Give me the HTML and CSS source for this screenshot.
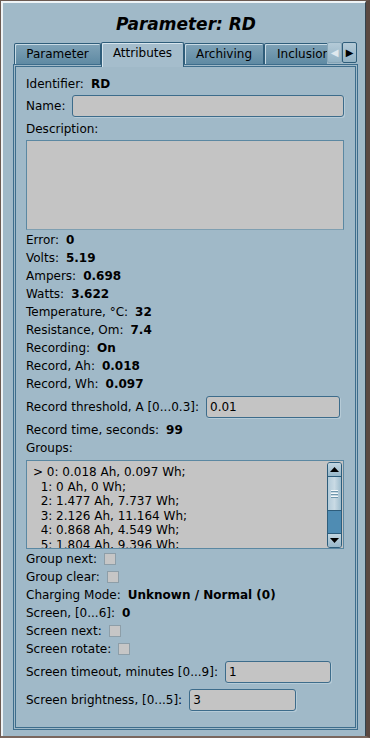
FILE: index.html
```html
<!DOCTYPE html>
<html>
<head>
    <title>Parameter: RD</title>
    <link rel="stylesheet" href="styles.css">
</head>
<body>
    <div class="window">
        <div class="frame">
            <h1 class="title">Parameter: RD</h1>

            <div class="tabs-row">
                <div class="tab-strip">
                    <div class="tab w-param">Parameter</div>
                    <div class="tab active w-attr">Attributes</div>
                    <div class="tab w-arch">Archiving</div>
                    <div class="tab w-incl">Inclusion</div>
                </div>
                <div class="tab-arrow disabled">&#9664;</div>
                <div class="tab-arrow">&#9654;</div>
            </div>

            <div class="panel">
                <div class="row"><span>Identifier:</span><b>RD</b></div>
                <div class="row field mt2"><span>Name:</span><input type="text" class="input grow" /></div>
                <div class="row mt3"><span>Description:</span></div>
                <textarea class="textarea mt2"></textarea>

                <div class="row mt1"><span>Error:</span><b>0</b></div>
                <div class="row"><span>Volts:</span><b>5.19</b></div>
                <div class="row"><span>Ampers:</span><b>0.698</b></div>
                <div class="row"><span>Watts:</span><b>3.622</b></div>
                <div class="row"><span>Temperature, °C:</span><b>32</b></div>
                <div class="row"><span>Resistance, Om:</span><b>7.4</b></div>
                <div class="row"><span>Recording:</span><b>On</b></div>
                <div class="row"><span>Record, Ah:</span><b>0.018</b></div>
                <div class="row"><span>Record, Wh:</span><b>0.097</b></div>

                <div class="row field mt3"><span>Record threshold, A [0...0.3]:</span><input type="text" class="input w-threshold" value="0.01" /></div>
                <div class="row mt3"><span>Record time, seconds:</span><b>99</b></div>
                <div class="row"><span>Groups:</span></div>

                <div class="list mt3">
                    <div class="list-lines">
                        <div class="line">&gt; 0: 0.018 Ah, 0.097 Wh;</div>
                        <div class="line">  1: 0 Ah, 0 Wh;</div>
                        <div class="line">  2: 1.477 Ah, 7.737 Wh;</div>
                        <div class="line">  3: 2.126 Ah, 11.164 Wh;</div>
                        <div class="line">  4: 0.868 Ah, 4.549 Wh;</div>
                        <div class="line">  5: 1.804 Ah, 9.396 Wh;</div>
                    </div>
                    <div class="scrollbar">
                        <div class="sb-btn">
                            <svg width="9" height="5" viewBox="0 0 9 5"><polygon points="0,5 9,5 4.5,0" fill="#000"/></svg>
                        </div>
                        <div class="sb-thumb"><span></span><span></span><span></span></div>
                        <div class="sb-track"></div>
                        <div class="sb-btn">
                            <svg width="9" height="5" viewBox="0 0 9 5"><polygon points="0,0 9,0 4.5,5" fill="#000"/></svg>
                        </div>
                    </div>
                </div>

                <div class="row mt1"><span>Group next:</span><span class="check"></span></div>
                <div class="row"><span>Group clear:</span><span class="check"></span></div>
                <div class="row"><span>Charging Mode:</span><b>Unknown / Normal (0)</b></div>
                <div class="row"><span>Screen, [0...6]:</span><b>0</b></div>
                <div class="row"><span>Screen next:</span><span class="check"></span></div>
                <div class="row"><span>Screen rotate:</span><span class="check"></span></div>

                <div class="row field mt3"><span>Screen timeout, minutes [0...9]:</span><input type="text" class="input w-timeout" value="1" /></div>
                <div class="row field mt6"><span>Screen brightness, [0...5]:</span><input type="text" class="input w-bright" value="3" /></div>
            </div>
        </div>
    </div>
</body>
</html>
```

FILE: styles.css
```css
* {
    margin: 0;
    padding: 0;
    box-sizing: border-box;
}

body {
    font-family: "DejaVu Sans", "Liberation Sans", sans-serif;
    font-size: 12px;
    color: #000;
    background: #6b5a52;
}

.window {
    width: 370px;
    height: 738px;
    border-top: 1px solid #6b5a52;
    border-left: 1px solid #6b5a52;
    border-right: 4px solid #5a4942;
    border-bottom: 2px solid #7a675e;
    background: #a0b9c8;
}

.frame {
    height: 100%;
    border-top: 2px solid #eef3f6;
    border-left: 2px solid #eef3f6;
    border-right: 1px solid #33434d;
    padding: 0 6px 0 10px;
}

.title {
    font-size: 17px;
    font-weight: bold;
    font-style: italic;
    text-align: center;
    line-height: 20px;
    padding-top: 11px;
    margin-bottom: 8px;
}

/* tabs */
.tabs-row {
    display: flex;
    align-items: flex-end;
    height: 22px;
    margin-left: 1px;
}

.tab-strip {
    display: flex;
    align-items: flex-end;
    width: 313px;
    height: 25px;
    overflow: hidden;
    align-self: flex-start;
    position: relative;
    z-index: 2;
}

.tab {
    flex: none;
    height: 21px;
    line-height: 20px;
    text-align: center;
    font-size: 12px;
    border: 1px solid #2f5d7a;
    border-bottom: none;
    border-radius: 2px 2px 0 0;
    background: linear-gradient(#7fa2b7, #5f8aa3);
    box-shadow: inset 1px 1px 0 #c9dbe5;
    margin-bottom: 3px;
}

.tab.active {
    height: 25px;
    line-height: 21px;
    margin-bottom: 0;
    background: #a5bdcc;
    box-shadow: inset 1px 1px 0 #d7e5ed;
}

.w-param { width: 87px; }
.w-attr { width: 83px; }
.w-arch { width: 80px; }
.w-incl { width: 80px; text-align: left; padding-left: 12px; }

.tab-arrow {
    width: 15px;
    height: 21px;
    margin-bottom: 1px;
    border: 1px solid #2f5d7a;
    border-radius: 2px;
    background: linear-gradient(#b4cad7, #94b3c5);
    font-size: 10px;
    line-height: 19px;
    text-align: center;
    color: #000;
}

.tab-arrow.disabled {
    color: #dfe8ee;
    border-color: #87a6b8;
}

/* panel */
.panel {
    width: 345px;
    height: 666px;
    border: 3px double #3d6d8c;
    padding: 8px 11px 0 10px;
    display: flex;
    flex-direction: column;
    position: relative;
    z-index: 1;
}

.row {
    display: flex;
    align-items: center;
    gap: 7px;
    height: 18px;
    white-space: nowrap;
}

.row b {
    font-weight: bold;
}

.row.field {
    height: 22px;
}

.mt1 { margin-top: 1px; }
.mt2 { margin-top: 2px; }
.mt3 { margin-top: 3px; }
.mt6 { margin-top: 6px; }

.input {
    height: 22px;
    background: #c4c4c4;
    border: 1px solid #3d6c8b;
    border-radius: 3px;
    box-shadow: 1px 1px 0 #b6cbd7;
    font-family: inherit;
    font-size: 12px;
    padding: 0 3px;
    color: #000;
    outline: none;
}

.grow { flex: 1; min-width: 0; }
.w-threshold { width: 134px; }
.w-timeout { width: 106px; }
.w-bright { width: 107px; }

.textarea {
    width: 318px;
    height: 90px;
    background: #c4c4c4;
    border: 1px solid #5b88a2;
    border-bottom-color: #7f9fb1;
    resize: none;
    outline: none;
}

/* groups list */
.list {
    display: flex;
    width: 318px;
    height: 89px;
    background: #c4c4c4;
    border: 1px solid #5b88a2;
}

.list-lines {
    flex: 1;
    overflow: hidden;
    padding: 4px 0 0 6px;
}

.line {
    white-space: pre;
    line-height: 14.6px;
    height: 14.6px;
}

.scrollbar {
    width: 15px;
    margin: 1px 1px 0 0;
    height: 86px;
    display: flex;
    flex-direction: column;
    border: 1px solid #2e5d7b;
    border-radius: 3px;
    overflow: hidden;
}

.sb-btn {
    height: 14px;
    display: flex;
    align-items: center;
    justify-content: center;
    background: linear-gradient(#c2d5e0, #98b8ca);
    border-bottom: 1px solid #2e5d7b;
}

.sb-btn:last-child {
    border-bottom: none;
    border-top: 1px solid #2e5d7b;
}

.sb-thumb {
    height: 34px;
    display: flex;
    flex-direction: column;
    justify-content: center;
    align-items: center;
    gap: 2px;
    background: linear-gradient(90deg, #b3cbd9, #c9dae4 50%, #9dbccd);
    border-bottom: 1px solid #2e5d7b;
}

.sb-thumb span {
    display: block;
    width: 7px;
    height: 1px;
    background: #f4f8fa;
    box-shadow: 0 1px 0 #6f97ae;
}

.sb-track {
    flex: 1;
    background: #4f8cb3;
}

.check {
    display: inline-block;
    width: 12px;
    height: 12px;
    background: #c6c6c6;
    border: 1px solid #8d9ea8;
    margin-top: -1px;
}
```
